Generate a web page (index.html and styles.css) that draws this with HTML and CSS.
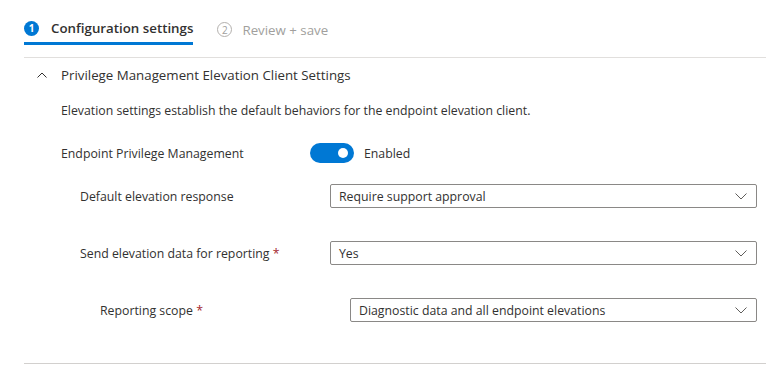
FILE: index.html
```html
<!DOCTYPE html>
<html>
<head>
<meta charset="utf-8">
<link rel="stylesheet" href="styles.css">
</head>
<body>
<div class="page">
  <div class="tabs">
    <div class="tab active">
      <span class="step step-active">1</span>
      <span class="tab-label">Configuration settings</span>
    </div>
    <div class="tab tab2">
      <span class="step step-idle">2</span>
      <span class="tab-label idle">Review + save</span>
    </div>
  </div>
  <div class="section-header">
    <svg class="chev-up" width="10" height="6" viewBox="0 0 10 6"><path d="M0.5 5.5 L5 1 L9.5 5.5" fill="none" stroke="#323130" stroke-width="1"/></svg>
    <span>Privilege Management Elevation Client Settings</span>
  </div>
  <div class="fields">
    <div class="desc">Elevation settings establish the default behaviors for the endpoint elevation client.</div>
    <div class="row r-epm">
      <div class="label">Endpoint Privilege Management</div>
      <div class="toggle-wrap">
        <span class="toggle"><span class="knob"></span></span>
        <span>Enabled</span>
      </div>
    </div>
    <div class="row r-dd1 indent1">
      <div class="label">Default elevation response</div>
      <div class="select"><span>Require support approval</span>
        <svg width="12" height="7" viewBox="0 0 12 7"><path d="M0.5 0.5 L6 6 L11.5 0.5" fill="none" stroke="#605e5c" stroke-width="1"/></svg>
      </div>
    </div>
    <div class="row r-dd2 indent1">
      <div class="label">Send elevation data for reporting <span class="req">*</span></div>
      <div class="select"><span>Yes</span>
        <svg width="12" height="7" viewBox="0 0 12 7"><path d="M0.5 0.5 L6 6 L11.5 0.5" fill="none" stroke="#605e5c" stroke-width="1"/></svg>
      </div>
    </div>
    <div class="row r-dd3 indent2">
      <div class="label">Reporting scope <span class="req">*</span></div>
      <div class="select"><span>Diagnostic data and all endpoint elevations</span>
        <svg width="12" height="7" viewBox="0 0 12 7"><path d="M0.5 0.5 L6 6 L11.5 0.5" fill="none" stroke="#605e5c" stroke-width="1"/></svg>
      </div>
    </div>
  </div>
  <div class="bottom-line"></div>
</div>
</body>
</html>
```
FILE: styles.css
```css
* { box-sizing: border-box; }
html, body { margin: 0; padding: 0; background: #fff; }
body {
  font-family: "Segoe UI", "Open Sans", "Noto Sans", sans-serif;
  color: #323130;
  font-size: 12.3px;
}
.page { width: 783px; height: 387px; padding: 0 17px 0 24px; }
.tabs {
  display: flex;
  height: 58px;
  border-bottom: 1px solid #e1dfdd;
  align-items: flex-start;
  gap: 24px;
}
.tab {
  display: flex;
  align-items: center;
  gap: 12px;
  height: 45px;
  padding-top: 14px;
}
.tab2 { gap: 10px; }
.tab.active { border-bottom: 3px solid #0078d4; }
.step {
  width: 15px; height: 15px;
  border-radius: 50%;
  display: flex; align-items: center; justify-content: center;
  font-size: 10px; font-weight: 700; line-height: 1;
}
.step-active { background: #0078d4; color: #fff; }
.step-idle { border: 1px solid #b3b0ad; color: #a19f9d; font-weight: 400; }
.tab-label { font-size: 13.3px; font-weight: 600; color: #323130; }
.tab-label.idle { font-weight: 400; color: #a19f9d; }
.section-header {
  display: flex; align-items: center;
  height: 34px;
  padding-left: 13px;
  gap: 14px;
  font-size: 13.3px;
}
.fields { padding-left: 37px; padding-right: 9px; }
.desc { height: 20px; line-height: 20px; margin-top: 9px; }
.row { display: flex; align-items: center; height: 24px; }
.label { width: 249px; flex: none; }
.indent1 { padding-left: 19px; }
.indent2 { padding-left: 39px; }
.indent1 .label, .indent2 .label { width: 250px; }
.r-epm { margin-top: 20px; }
.r-dd1 { margin-top: 19px; }
.r-dd2 { margin-top: 33px; }
.r-dd3 { margin-top: 33px; }
.req { color: #a4262c; }
.toggle-wrap { display: flex; align-items: center; gap: 10px; }
.toggle {
  width: 44px; height: 20px; border-radius: 10px;
  background: #0078d4; position: relative; display: block;
}
.knob {
  position: absolute; right: 6px; top: 5px;
  width: 10px; height: 10px; border-radius: 50%; background: #fff;
}
.select {
  flex: 1;
  height: 24px;
  border: 1px solid #8a8886;
  border-radius: 2px;
  display: flex; align-items: center; justify-content: space-between;
  padding: 0 9px 0 8px;
}
.bottom-line { margin-top: 41px; border-top: 1px solid #d2d0ce; }
```
